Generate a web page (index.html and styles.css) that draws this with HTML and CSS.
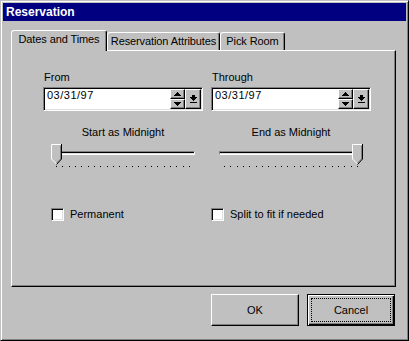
FILE: index.html
```html
<!DOCTYPE html>
<html lang="en">
<head>
    <meta charset="UTF-8">
    <meta name="viewport" content="width=device-width, initial-scale=1.0">
    <title>Reservation</title>
    <link rel="stylesheet" href="styles.css">
</head>
<body>
    <div class="window">
        <div class="titlebar">Reservation</div>
        <div class="client">
            <div class="tabs">
                <div class="tab tab-dates active">Dates and Times</div>
                <div class="tab tab-attrs">Reservation Attributes</div>
                <div class="tab tab-room">Pick Room</div>
            </div>
            <div class="panel">
                <div class="grid">
                    <div class="field">
                        <div class="label">From</div>
                        <div class="datebox">
                            <span class="value">03/31/97</span>
                            <div class="spin">
                                <span class="minibtn"><svg width="7" height="4"><path d="M3 0h1v1h1v1h1v1h1v1H0V3h1V2h1V1h1z"/></svg></span>
                                <span class="minibtn"><svg width="7" height="4"><path d="M0 0h7v1H6v1H5v1H4v1H3V3H2V2H1V1H0z"/></svg></span>
                            </div>
                            <span class="minibtn drop"><svg width="7" height="8"><path d="M2 0h3v2H2z M0 2h7v1H6v1H5v1H4v1H3V5H2V4H1V3H0z M0 7h7v1H0z"/></svg></span>
                        </div>
                    </div>
                    <div class="field">
                        <div class="label">Through</div>
                        <div class="datebox">
                            <span class="value">03/31/97</span>
                            <div class="spin">
                                <span class="minibtn"><svg width="7" height="4"><path d="M3 0h1v1h1v1h1v1h1v1H0V3h1V2h1V1h1z"/></svg></span>
                                <span class="minibtn"><svg width="7" height="4"><path d="M0 0h7v1H6v1H5v1H4v1H3V3H2V2H1V1H0z"/></svg></span>
                            </div>
                            <span class="minibtn drop"><svg width="7" height="8"><path d="M2 0h3v2H2z M0 2h7v1H6v1H5v1H4v1H3V5H2V4H1V3H0z M0 7h7v1H0z"/></svg></span>
                        </div>
                    </div>

                    <div class="slider">
                        <div class="slider-label">Start as Midnight</div>
                        <div class="rail">
                            <svg class="thumb thumb-start" width="11" height="21">
                                <polygon points="0,0 11,0 11,15 5.5,20.5 0,15" fill="#c0c0c0"/>
                                <polyline points="5.5,20 0.5,15 0.5,0.5 10.5,0.5" fill="none" stroke="#fff"/>
                                <polyline points="9.5,1.5 9.5,15 5.5,19" fill="none" stroke="#808080"/>
                                <polyline points="10.5,0 10.5,15 5.5,20.5" fill="none" stroke="#000"/>
                            </svg>
                            <div class="track"></div>
                            <div class="ticks">
                                <i></i><i></i><i></i><i></i><i></i><i></i><i></i><i></i><i></i><i></i><i></i>
                                <i></i><i></i><i></i><i></i><i></i><i></i><i></i><i></i><i></i><i></i><i></i>
                            </div>
                        </div>
                    </div>
                    <div class="slider">
                        <div class="slider-label">End as Midnight</div>
                        <div class="rail">
                            <svg class="thumb thumb-end" width="11" height="21">
                                <polygon points="0,0 11,0 11,15 5.5,20.5 0,15" fill="#c0c0c0"/>
                                <polyline points="5.5,20 0.5,15 0.5,0.5 10.5,0.5" fill="none" stroke="#fff"/>
                                <polyline points="9.5,1.5 9.5,15 5.5,19" fill="none" stroke="#808080"/>
                                <polyline points="10.5,0 10.5,15 5.5,20.5" fill="none" stroke="#000"/>
                            </svg>
                            <div class="track"></div>
                            <div class="ticks">
                                <i></i><i></i><i></i><i></i><i></i><i></i><i></i><i></i><i></i><i></i><i></i>
                                <i></i><i></i><i></i><i></i><i></i><i></i><i></i><i></i><i></i><i></i><i></i>
                            </div>
                        </div>
                    </div>

                    <label class="check check-left"><span class="box"></span>Permanent</label>
                    <label class="check"><span class="box"></span>Split to fit if needed</label>
                </div>
            </div>
            <div class="actions">
                <div class="button">OK</div>
                <div class="button default">Cancel</div>
            </div>
        </div>
    </div>
</body>
</html>
```

FILE: styles.css
```css
body {
    margin: 0;
    font-family: "Liberation Sans", Arial, sans-serif;
    font-size: 11px;
    color: #000;
    background: #c0c0c0;
}
.window {
    box-sizing: border-box;
    width: 409px;
    height: 341px;
    padding: 2px;
    background: #c0c0c0;
    border: 1px solid;
    border-color: #c0c0c0 #000 #000 #c0c0c0;
    box-shadow: inset 1px 1px #fff, inset -1px -1px #808080;
}
.titlebar {
    height: 18px;
    line-height: 18px;
    padding-left: 3px;
    background: #000080;
    color: #fff;
    font-size: 12px;
    font-weight: bold;
}
.client {
    padding: 9px 0 0 8px;
}

/* pestañas */
.tabs {
    display: flex;
    align-items: flex-end;
    height: 20px;
}
.tab {
    box-sizing: border-box;
    height: 18px;
    padding-top: 2px;
    line-height: 13px;
    text-align: center;
    white-space: nowrap;
    letter-spacing: -0.1px;
    border: 1px solid;
    border-bottom: 0;
    border-color: #fff #000 transparent #fff;
    border-radius: 3px 3px 0 0;
    box-shadow: inset -1px 0 #808080;
}
.tab.active {
    position: relative;
    z-index: 1;
    height: 21px;
    margin-bottom: -1px;
    background: #c0c0c0;
}
.tab-dates { width: 96px; }
.tab-attrs { width: 113px; }
.tab-room { width: 65px; }

.panel {
    box-sizing: border-box;
    width: 385px;
    height: 237px;
    padding: 20px 0 0 31px;
    border: 1px solid;
    border-color: #fff #000 #000 #fff;
    box-shadow: inset -1px -1px #808080;
}
.grid {
    display: grid;
    grid-template-columns: 160px 160px;
    column-gap: 8px;
}

/* campos de fecha */
.label {
    line-height: 13px;
    padding-left: 1px;
    margin-bottom: 3px;
}
.datebox {
    box-sizing: border-box;
    display: flex;
    height: 24px;
    padding: 1px;
    background: #fff;
    border: 1px solid;
    border-color: #808080 #fff #fff #808080;
    box-shadow: inset 1px 1px #000, inset -1px -1px #dfdfdf;
}
.value {
    flex: 1;
    padding-left: 2px;
    line-height: 12px;
    letter-spacing: 0.5px;
}
.spin {
    display: flex;
    flex-direction: column;
    width: 15px;
}
.minibtn {
    box-sizing: border-box;
    display: flex;
    align-items: center;
    justify-content: center;
    height: 10px;
    background: #c0c0c0;
    border: 1px solid;
    border-color: #fff #000 #000 #fff;
    box-shadow: inset -1px -1px #808080;
}
.minibtn.drop {
    width: 16px;
    height: 20px;
}

/* deslizadores */
.slider {
    margin-top: 15px;
}
.slider-label {
    line-height: 13px;
    text-align: center;
}
.rail {
    position: relative;
    margin: 5px 8px 0;
    padding-top: 7px;
}
.thumb {
    position: absolute;
    top: 0;
    display: block;
}
.thumb-start { left: 0; }
.thumb-end { right: 0; }
.track {
    box-sizing: border-box;
    height: 4px;
    background: #dfdfdf;
    border: 1px solid;
    border-color: #808080 #fff #fff #808080;
    box-shadow: inset 0 1px #000;
}
.ticks {
    display: flex;
    justify-content: space-between;
    margin-top: 11px;
    padding: 0 5px;
}
.ticks i {
    width: 1px;
    height: 1px;
    background: #000;
}

/* casillas */
.check {
    display: flex;
    align-items: center;
    gap: 6px;
    margin-top: 41px;
    line-height: 13px;
}
.check-left {
    padding-left: 8px;
}
.box {
    box-sizing: border-box;
    width: 13px;
    height: 13px;
    background: #fff;
    border: 1px solid;
    border-color: #808080 #fff #fff #808080;
    box-shadow: inset 1px 1px #000, inset -1px -1px #dfdfdf;
}

/* botones */
.actions {
    display: flex;
    justify-content: flex-end;
    gap: 8px;
    width: 384px;
    margin-top: 7px;
}
.button {
    position: relative;
    box-sizing: border-box;
    display: flex;
    align-items: center;
    justify-content: center;
    width: 88px;
    height: 32px;
    background: #c0c0c0;
    border: 1px solid;
    border-color: #fff #000 #000 #fff;
    box-shadow: inset -1px -1px #808080;
}
.button.default {
    border-color: #000;
    box-shadow: inset 1px 1px #fff, inset -1px -1px #000, inset -2px -2px #808080;
}
.button.default::after {
    content: "";
    position: absolute;
    inset: 3px;
    border: 1px dotted #000;
}
```
